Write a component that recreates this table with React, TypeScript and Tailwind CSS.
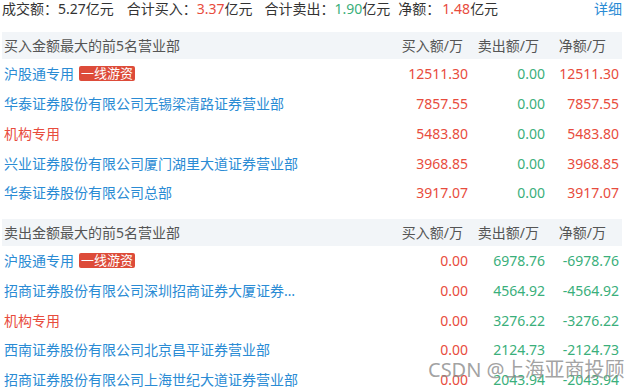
import React from "react";

type Row = {
  name: string;
  color: "blue" | "red";
  badge?: boolean;
  buy: string;
  sell: string;
  net: string;
  netUp: boolean;
};

const buyRows: Row[] = [
  { name: "沪股通专用", color: "blue", badge: true, buy: "12511.30", sell: "0.00", net: "12511.30", netUp: true },
  { name: "华泰证券股份有限公司无锡梁清路证券营业部", color: "blue", buy: "7857.55", sell: "0.00", net: "7857.55", netUp: true },
  { name: "机构专用", color: "red", buy: "5483.80", sell: "0.00", net: "5483.80", netUp: true },
  { name: "兴业证券股份有限公司厦门湖里大道证券营业部", color: "blue", buy: "3968.85", sell: "0.00", net: "3968.85", netUp: true },
  { name: "华泰证券股份有限公司总部", color: "blue", buy: "3917.07", sell: "0.00", net: "3917.07", netUp: true },
];

const sellRows: Row[] = [
  { name: "沪股通专用", color: "blue", badge: true, buy: "0.00", sell: "6978.76", net: "-6978.76", netUp: false },
  { name: "招商证券股份有限公司深圳招商证券大厦证券营业部", color: "blue", buy: "0.00", sell: "4564.92", net: "-4564.92", netUp: false },
  { name: "机构专用", color: "red", buy: "0.00", sell: "3276.22", net: "-3276.22", netUp: false },
  { name: "西南证券股份有限公司北京昌平证券营业部", color: "blue", buy: "0.00", sell: "2124.73", net: "-2124.73", netUp: false },
  { name: "招商证券股份有限公司上海世纪大道证券营业部", color: "blue", buy: "0.00", sell: "2043.94", net: "-2043.94", netUp: false },
];

function Header({ title }: { title: string }) {
  return (
    <div className="flex h-[27px] items-center bg-[#f2f5f8] text-[#555]">
      <div className="flex-1 pl-[2px]">{title}</div>
      <div className="w-[90px] pr-[5px] text-right">买入额/万</div>
      <div className="w-[77px] pr-[6px] text-right">卖出额/万</div>
      <div className="w-[77px] pr-[16px] text-right">净额/万</div>
    </div>
  );
}

function TableRow({ row }: { row: Row }) {
  return (
    <div className="flex h-[29.75px] items-center">
      <div className="flex min-w-0 flex-1 items-center pl-[2px]">
        <span
          className={
            "max-w-[296px] truncate " +
            (row.color === "blue" ? "text-[#2a8bd4]" : "text-[#e84c3d]")
          }
        >
          {row.name}
        </span>
        {row.badge && (
          <span className="ml-[5px] rounded-[2px] bg-[#dd4b39] px-[2px] text-[13px] leading-[15px] text-white">
            一线游资
          </span>
        )}
      </div>
      <div className="w-[90px] text-right text-[#e84c3d]">{row.buy}</div>
      <div className="w-[77px] text-right text-[#3aaf7b]">{row.sell}</div>
      <div className={"w-[77px] pr-[3px] text-right " + (row.netUp ? "text-[#e84c3d]" : "text-[#3aaf7b]")}>
        {row.net}
      </div>
    </div>
  );
}

export default function App() {
  return (
    <div
      className="relative h-[389px] w-[638px] overflow-hidden bg-white text-[14px] text-[#333]"
      style={{ fontFamily: '"Noto Sans", "Noto Sans CJK SC", sans-serif' }}
    >
      <div className="ml-[2px] w-[620px]">
        <div className="flex h-[18px] items-center leading-[18px]">
          <span>成交额：</span>
          <span>5.27亿元</span>
          <span className="ml-[13px]">合计买入：</span>
          <span className="text-[#e84c3d]">3.37</span>
          <span>亿元</span>
          <span className="ml-[12px]">合计卖出：</span>
          <span className="text-[#3aaf7b]">1.90</span>
          <span>亿元</span>
          <span className="ml-[8px]">净额：</span>
          <span className="ml-[2px] text-[#e84c3d]">1.48</span>
          <span>亿元</span>
          <span className="ml-auto text-[#2a8bd4]">详细</span>
        </div>

        <div className="mt-[14px]">
          <Header title="买入金额最大的前5名营业部" />
          {buyRows.map((r) => (
            <TableRow key={"b" + r.name} row={r} />
          ))}
        </div>

        <div className="mt-[11px]">
          <Header title="卖出金额最大的前5名营业部" />
          {sellRows.map((r) => (
            <TableRow key={"s" + r.name} row={r} />
          ))}
        </div>
      </div>

      <div className="absolute left-[428px] top-[356px] text-[20px] leading-[28px] text-[#8a8a8a]/80">
        CSDN @上海亚商投顾
      </div>
    </div>
  );
}
